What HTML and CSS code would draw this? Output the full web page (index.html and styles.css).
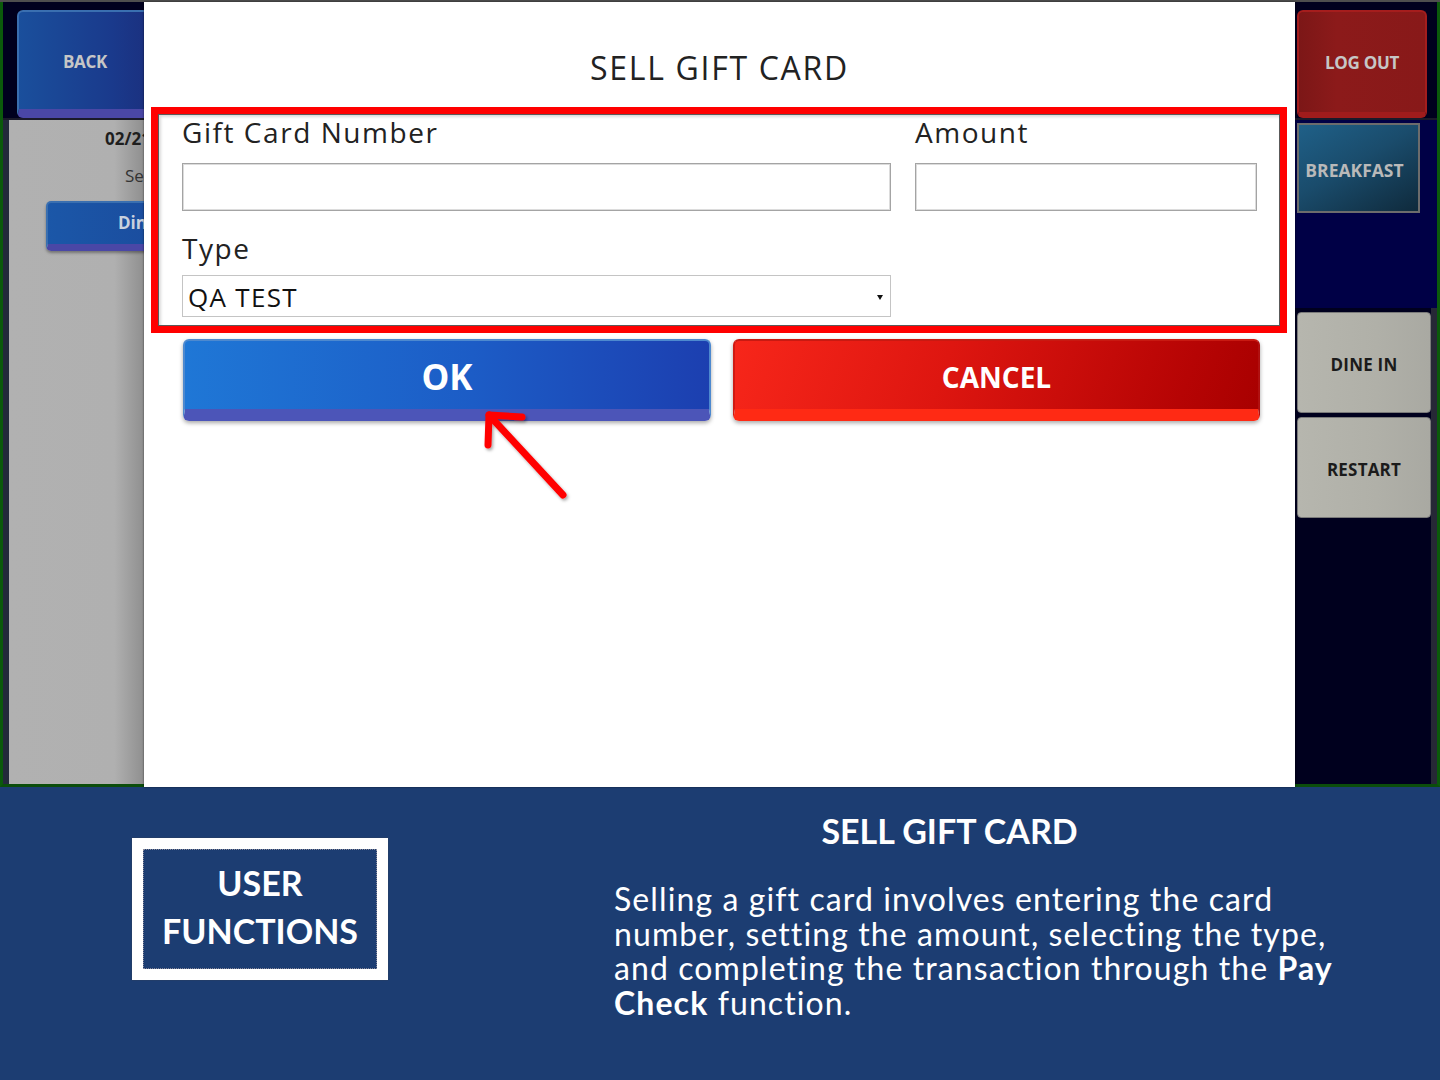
FILE: index.html
```html
<!DOCTYPE html>
<html lang="en">
<head>
<meta charset="utf-8">
<title>Sell Gift Card</title>
<link rel="stylesheet" href="styles.css">
</head>
<body>
<div class="page">
  <div class="screen">
    <aside class="side side-left">
      <div class="side-top">
        <div class="pos-btn back-btn">BACK</div>
      </div>
      <div class="left-panel">
        <div class="date">02/21</div>
        <div class="server">Server</div>
        <div class="dine-btn">Dine In</div>
      </div>
    </aside>

    <main class="modal">
      <h1 class="modal-title">SELL GIFT CARD</h1>
      <div class="highlight">
        <div class="form">
          <div class="field">
            <div class="label">Gift Card Number</div>
            <div class="input"></div>
          </div>
          <div class="field">
            <div class="label">Amount</div>
            <div class="input"></div>
          </div>
          <div class="field">
            <div class="label label-type">Type</div>
            <div class="select">
              <span>QA TEST</span>
              <svg class="caret" width="6" height="5" viewBox="0 0 6 5"><path d="M0 0H6L3 5Z" fill="#111"/></svg>
            </div>
          </div>
        </div>
      </div>
      <div class="actions">
        <div class="btn btn-ok">OK</div>
        <div class="btn btn-cancel">CANCEL</div>
      </div>
      <svg class="arrow" width="110" height="110" viewBox="0 0 110 110">
        <defs>
          <filter id="sh" x="-20%" y="-20%" width="150%" height="150%">
            <feDropShadow dx="1.5" dy="2" stdDeviation="1.5" flood-color="#000" flood-opacity="0.35"/>
          </filter>
        </defs>
        <g filter="url(#sh)" stroke="#ff0000" stroke-width="7" stroke-linecap="round" stroke-linejoin="round" fill="none">
          <path d="M14 43 L15 13 L48 15"/>
          <path d="M15 13 L89 93"/>
        </g>
      </svg>
    </main>

    <aside class="side side-right">
      <div class="side-top right-top">
        <div class="pos-btn logout-btn">LOG OUT</div>
      </div>
      <div class="right-mid">
        <div class="pos-btn breakfast-btn">BREAKFAST</div>
      </div>
      <div class="right-low">
        <div class="gray-btn">DINE IN</div>
        <div class="gray-btn">RESTART</div>
      </div>
    </aside>
  </div>

  <section class="caption">
    <div class="tag">
      <div class="tag-inner">USER<br>FUNCTIONS</div>
    </div>
    <div class="desc">
      <h2 class="desc-title">SELL GIFT CARD</h2>
      <p class="desc-text">Selling a gift card involves entering the card<br>number, setting the amount, selecting the type,<br>and completing the transaction through the <b>Pay</b><br><b>Check</b> function.</p>
    </div>
  </section>
</div>
</body>
</html>
```

FILE: styles.css
```css
* { box-sizing: border-box; }

html, body {
  margin: 0;
  padding: 0;
  width: 1440px;
  height: 1080px;
  overflow: hidden;
  background: #1c3d72;
}

.page {
  width: 1440px;
  height: 1080px;
  display: flex;
  flex-direction: column;
}

/* ---------- POS screen ---------- */
.screen {
  height: 787px;
  display: flex;
  border-top: 2px solid #4e4e4e;
  background: #000020;
}

.side {
  display: flex;
  flex-direction: column;
  overflow: hidden;
  white-space: nowrap;
  font-family: "Open Sans", "Liberation Sans", sans-serif;
}

.side-left {
  width: 144px;
  border-left: 3px solid #0b5a0b;
  border-bottom: 3px solid #0b4d0b;
}

.side-right {
  width: 145px;
  border-right: 3px solid #0b5a0b;
  border-bottom: 3px solid #0b4d0b;
}

.side-top {
  height: 118px;
  background: #00001e;
  border-bottom: 2px solid #1a1a2a;
  padding: 8px 0 0 14px;
}

.right-top {
  padding: 8px 0 0 2px;
}

.pos-btn {
  display: flex;
  align-items: center;
  justify-content: center;
  font-weight: 700;
  font-size: 17px;
  color: #c6c6c6;
  letter-spacing: -0.3px;
}

.back-btn {
  width: 136px;
  height: 108px;
  border-radius: 6px;
  border: 2px solid #3a6fb0;
  border-bottom: 9px solid #4a47a6;
  background: linear-gradient(to right, #1a4f9c, #1a3a8c 70%, #1b2f7e);
  padding-top: 2px;
}

.left-panel {
  flex: 1;
  border-left: 6px solid #232a3a;
  background: linear-gradient(to right, #b1b1b1 0%, #b0b0b0 78%, #8f8f8f 100%);
  padding-top: 8px;
}

.date {
  padding-left: 96px;
  font-size: 17px;
  font-weight: 700;
  line-height: 22px;
  color: #1e1e1e;
}

.server {
  margin-top: 15px;
  padding-left: 116px;
  font-size: 17px;
  line-height: 22px;
  color: #333;
}

.dine-btn {
  margin: 14px 0 0 37px;
  width: 200px;
  height: 50px;
  border-radius: 5px;
  border: 2px solid #3a6fb0;
  border-bottom: 7px solid #4a47a6;
  background: linear-gradient(to right, #1b57a8, #1a4496);
  color: #c8d0de;
  font-size: 17px;
  font-weight: 700;
  line-height: 40px;
  padding-left: 70px;
  box-shadow: 0 2px 3px rgba(0,0,0,0.35);
}

.logout-btn {
  width: 130px;
  height: 108px;
  border-radius: 6px;
  border: 2px solid #a51d1d;
  border-bottom: 6px solid #a01c1c;
  background: linear-gradient(to right, #7c1717, #8c1a1a 30%, #881919);
}

.right-mid {
  height: 188px;
  background: #000046;
  padding: 3px 0 0 2px;
}

.breakfast-btn {
  width: 123px;
  height: 90px;
  border: 2px solid #6c6c6c;
  background: linear-gradient(150deg, #1f6088 0%, #1a4c6c 45%, #0f2a3c 100%);
  font-size: 17.5px;
  letter-spacing: 0;
  color: #b9b9b9;
  padding: 4px 8px 0 0;
}

.right-low {
  flex: 1;
  background: #00001e;
  border-right: 6px solid #262836;
  padding: 4px 0 0 2px;
  display: flex;
  flex-direction: column;
  gap: 4px;
}

.gray-btn {
  height: 101px;
  border-radius: 4px;
  border: 1px solid #7a7a7a;
  background: linear-gradient(to right, #b6b6ae, #b0b0a8 60%, #a9a9a2);
  display: flex;
  align-items: center;
  justify-content: center;
  font-weight: 700;
  font-size: 17px;
  color: #1b1b1b;
  letter-spacing: 0.2px;
  padding-top: 3px;
}

/* ---------- Modal ---------- */
.modal {
  position: relative;
  width: 1151px;
  flex-shrink: 0;
  background: #fff;
  box-shadow: 0 0 2px rgba(0,0,0,0.6);
  font-family: "Open Sans", "Liberation Sans", sans-serif;
  color: #222;
}

.modal-title {
  margin: 0;
  height: 105px;
  padding-top: 44px;
  text-align: center;
  font-size: 32px;
  font-weight: 400;
  line-height: 44px;
  letter-spacing: 1.7px;
  color: #222;
}

.highlight {
  margin: 0 8px 0 7px;
  border: 7px solid #ff0000;
}

.form {
  border: 1px solid #5a5a5a;
  box-shadow: inset 2px 2px 3px rgba(0,0,0,0.15);
  padding: 0 22px 8px 23px;
  display: grid;
  grid-template-columns: 709px 342px;
  column-gap: 24px;
}

.label {
  font-size: 28px;
  line-height: 34px;
  height: 34px;
  color: #222;
  letter-spacing: 1.55px;
}

.label-type {
  margin-top: 20px;
}

.input {
  margin-top: 14px;
  height: 48px;
  border: 1px solid #a4a4a4;
  box-shadow: inset 0 0 0 1px #dcdcdc;
  background: #fff;
}

.select {
  margin-top: 10px;
  height: 42px;
  border: 1px solid #c4c4c4;
  display: flex;
  align-items: center;
  justify-content: space-between;
  padding: 0 7px 0 5px;
  font-size: 26px;
  letter-spacing: 1.3px;
  color: #111;
}

.select span {
  line-height: 40px;
  padding-top: 2px;
}

.caret {
  margin-top: 2px;
}

.actions {
  display: flex;
  gap: 22px;
  margin: 6px 0 0 39px;
}

.btn {
  height: 82px;
  border-radius: 6px;
  border: 2px solid;
  border-bottom-width: 12px;
  display: flex;
  align-items: center;
  justify-content: center;
  color: #fff;
  font-weight: 700;
  box-shadow: 0 2px 4px rgba(0,0,0,0.35);
}

.btn-ok {
  width: 528px;
  border-color: #4d89cf #4d89cf #4c55b8 #4d89cf;
  background: linear-gradient(to right, #1f77d6, #1c5cc6 55%, #1c3fb0);
  font-size: 35px;
  padding-top: 3px;
}

.btn-cancel {
  width: 527px;
  border-color: #c81a12 #b01010 #ff2a14 #d01a12;
  background: linear-gradient(110deg, #f7261a 0%, #de1610 40%, #b60404 85%, #a80000 100%);
  font-size: 28px;
  padding-top: 3px;
}

.arrow {
  position: absolute;
  left: 330px;
  top: 400px;
}

/* ---------- Caption ---------- */
.caption {
  flex: 1;
  display: flex;
  align-items: flex-start;
  background: #1c3d72;
  font-family: Lato, "Liberation Sans", sans-serif;
  color: #fff;
}

.tag {
  margin: 51px 0 0 132px;
  width: 256px;
  height: 142px;
  border: 11px solid #fff;
  box-shadow: 0 0 1px #444;
}

.tag-inner {
  height: 100%;
  border: 1px dotted #8a8a9a;
  text-align: center;
  font-weight: 700;
  font-size: 34px;
  line-height: 48px;
  padding-top: 9px;
}

.desc {
  margin: 23px 0 0 226px;
  width: 671px;
}

.desc-title {
  margin: 0;
  text-align: center;
  font-size: 34px;
  font-weight: 700;
  line-height: 41px;
}

.desc-text {
  margin: 31px 0 0 0;
  white-space: nowrap;
  font-size: 32px;
  line-height: 34.7px;
  letter-spacing: 1.1px;
  font-weight: 400;
}

.desc-text b {
  font-weight: 700;
}
```
